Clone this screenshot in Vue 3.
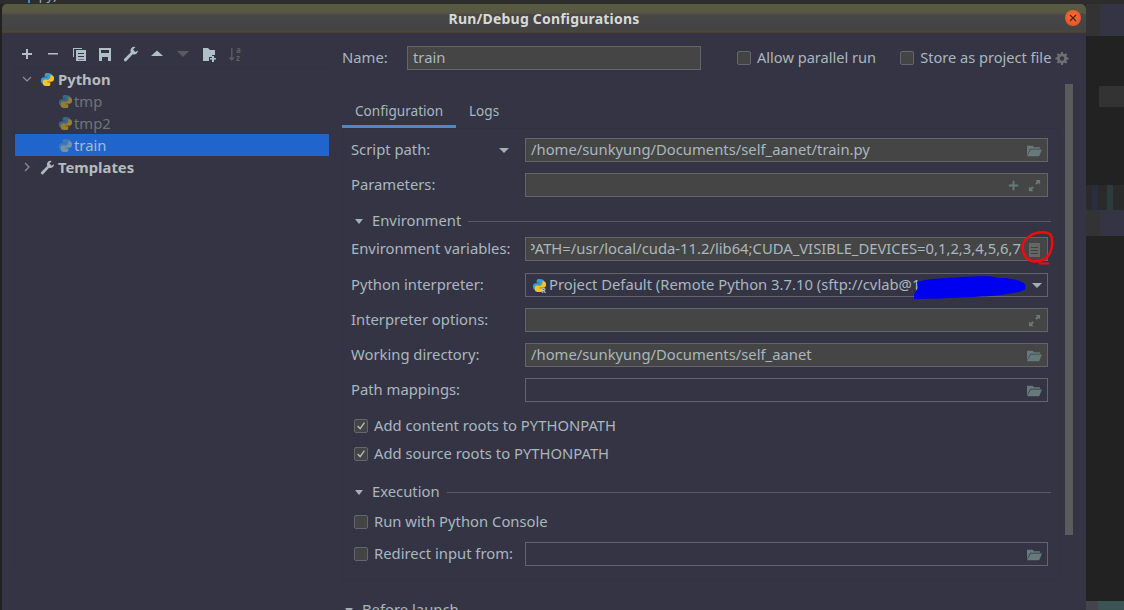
<script setup>
const pyIcon = {
  blue: 'M7.9 1C4.9 1 5 2.3 5 3.6V5h3v.6H3.8C2.3 5.600 1 6.700 1 9c0 2.400 1.100 3.500 2.500 3.500H5v-1.900c0-1.400 1.200-2.600 2.700-2.600h3c1.200 0 2.300-1 2.300-2.300V3.500C13 2 11.500 1 7.900 1Z',
  yellow: 'M8.100 15c3 0 2.900-1.300 2.900-2.600V11H8v-.6h4.200c1.500 0 2.800-1.100 2.800-3.400 0-2.400-1.100-3.500-2.500-3.500H11v1.900c0 1.400-1.200 2.600-2.700 2.600h-3C4.100 8 3 9 3 10.300v2.200C3 14 4.500 15 8.100 15Z'
}
const children = [
  { name: 'tmp', selected: false },
  { name: 'tmp2', selected: false },
  { name: 'train', selected: true }
]
</script>

<template>
  <div class="screen">
    <div class="behind-text"><span>Setup.py)</span></div>
    <div class="desk">
      <div class="dialog">
        <div class="titlebar">
          <span class="title">Run/Debug Configurations</span>
          <span class="close">
            <svg width="10" height="10" viewBox="0 0 10 10"><path d="M2 2l6 6M8 2l-6 6" stroke="#5a1d0a" stroke-width="1.300" fill="none"/></svg>
          </span>
        </div>
        <div class="body">
          <aside class="left">
            <div class="toolbar">
              <svg class="tb" viewBox="0 0 16 16"><path d="M7 3h2v4h4v2H9v4H7V9H3V7h4Z" fill="#afc0c6"/></svg>
              <svg class="tb" viewBox="0 0 16 16"><path d="M3 7h10v1.600H3Z" fill="#afc0c6"/></svg>
              <svg class="tb" viewBox="0 0 16 16"><path d="M2 2h9v1H3v8H2Z M5 4h10v11H5Zm2 3v1h6V7Zm0 3v1h6v-1Zm0 3v.6h6V13Z" fill="#afc0c6" fill-rule="evenodd"/></svg>
              <svg class="tb" viewBox="0 0 16 16"><path d="M2 2h12v13H2Zm2 2v3h8V4ZM5 11v4h6v-4Z" fill="#afc0c6" fill-rule="evenodd"/></svg>
              <svg class="tb" viewBox="0 0 16 16"><path d="M15 4.500a4 4 0 0 1-5.300 3.800L3.600 14.800a1.500 1.500 0 0 1-2.300-2.100l6.400-6.200A4 4 0 0 1 12.500 1L10 3.600 12.400 6Z" fill="#afc0c6"/></svg>
              <svg class="tb" viewBox="0 0 16 16"><path d="M8 4.500 14 10H2Z" fill="#afc0c6"/></svg>
              <svg class="tb" viewBox="0 0 16 16"><path d="M2 5h12L8 11Z" fill="#5a5b5e"/></svg>
              <svg class="tb" viewBox="0 0 16 16"><path d="M2 2h5l2 2h5v5h-3v2H8v4H2Z" fill="#afc0c6"/><path d="M11 10h2v2h2v1.500h-2V16h-2v-2.500H9V12h2Z" fill="#afc0c6"/></svg>
              <svg class="tb" viewBox="0 0 16 16"><path d="M4 2h1.500v9.500H8L4.700 15 1.500 11.500H4Z" fill="#5a5b5e"/><text x="9" y="7" class="az">a</text><text x="9" y="14.500" class="az">z</text></svg>
            </div>
            <div class="tree">
              <div class="node root">
                <svg class="arrow" viewBox="0 0 12 12"><path d="M2 4l4 4 4-4" fill="none" stroke="#8b9093" stroke-width="1.200"/></svg>
                <svg class="py" viewBox="0 0 16 16"><path :d="pyIcon.blue" fill="#3f9bd1"/><path :d="pyIcon.yellow" fill="#f6c51f"/></svg>
                <span>Python</span>
              </div>
              <div v-for="c in children" :key="c.name" class="node child" :class="{ selected: c.selected }">
                <svg class="py" viewBox="0 0 16 16"><path :d="pyIcon.blue" fill="#3f9bd1"/><path :d="pyIcon.yellow" fill="#f6c51f"/></svg>
                <span>{{ c.name }}</span>
              </div>
              <div class="node root">
                <svg class="arrow" viewBox="0 0 12 12"><path d="M4 2l4 4-4 4" fill="none" stroke="#8b9093" stroke-width="1.200"/></svg>
                <svg class="py wrench" viewBox="0 0 16 16"><path d="M15 4.500a4 4 0 0 1-5.300 3.800L3.600 14.800a1.500 1.500 0 0 1-2.300-2.100l6.400-6.200A4 4 0 0 1 12.500 1L10 3.600 12.400 6Z" fill="#afb8bb"/></svg>
                <span>Templates</span>
              </div>
            </div>
          </aside>

          <main class="right">
            <div class="name-row">
              <label class="name-label">Name:</label>
              <div class="field name-field">train</div>
              <div class="check-opt first"><span class="box"></span><span class="opt-text">Allow parallel run</span></div>
              <div class="check-opt second"><span class="box"></span><span class="opt-text">Store as project file</span></div>
              <svg class="gear" viewBox="0 0 16 16"><path d="M7 1h2l.4 2 1.500.6L12.600 2.500 14 4l-1.100 1.700.6 1.500 2 .4v2l-2 .4-.6 1.500L14 13l-1.400 1.400-1.700-1.100-1.500.6-.4 2H7l-.4-2-1.500-.6-1.700 1.100L2 13l1.100-1.700-.6-1.500-2-.4v-2l2-.4.6-1.500L2 4l1.400-1.500 1.700 1.100L6.600 3ZM8 6a2.500 2.500 0 1 0 0 5 2.500 2.500 0 0 0 0-5Z" fill="#6d7073" fill-rule="evenodd"/></svg>
            </div>

            <div class="main-scroll">
              <div class="scroll-content">
                <div class="tabs">
                  <div class="tab active">Configuration</div>
                  <div class="tab">Logs</div>
                </div>
                <div class="panel">
                  <div class="row r-script">
                    <label class="with-caret">Script path:<span class="caret"></span></label>
                    <div class="field">/home/sunkyung/Documents/self_aanet/train.py
                      <svg class="fld-ic" viewBox="0 0 16 16"><path d="M0 3h6l1.500 1.500H14V6H3.500L0 13Z M4 7h12l-3 7H0Z" fill="#66797b"/></svg>
                    </div>
                  </div>
                  <div class="row r-next">
                    <label>Parameters:</label>
                    <div class="field">
                      <svg class="fld-ic plus" viewBox="0 0 16 16"><path d="M7 3h2v4h4v2H9v4H7V9H3V7h4Z" fill="#66797b"/></svg>
                      <svg class="fld-ic" viewBox="0 0 16 16"><path d="M9 2h5v5l-1.700-1.700-2 2-1.600-1.600 2-2ZM7 14H2V9l1.700 1.700 2-2 1.600 1.600-2 2Z" fill="#66797b"/></svg>
                    </div>
                  </div>

                  <div class="section env"><span class="sec-caret"></span><span class="sec-title">Environment</span><span class="sec-line"></span></div>

                  <div class="row r-env">
                    <label>Environment variables:</label>
                    <div class="field env-field">
                      <span class="env-text"><span>PATH=/usr/local/cuda-11.2/lib64;CUDA_VISIBLE_DEVICES=0,1,2,3,4,5,6,7</span></span>
                      <span class="env-btn"><i></i><i></i><i></i></span>
                      <svg class="red" viewBox="0 0 33 34"><path d="M8 6C12 1 24 0 29 3c3 4 3 13 0 19-3 6-10 10-18 8C4 28 1 21 2 14 3 10 5 7 9 5" fill="none" stroke="#f50a0a" stroke-width="2.500"/><path d="M18 32.500h10" stroke="#f50a0a" stroke-width="2"/></svg>
                    </div>
                  </div>
                  <div class="row r-interp">
                    <label>Python interpreter:</label>
                    <div class="field combo">
                      <svg class="py small" viewBox="0 0 16 16"><path :d="pyIcon.blue" fill="#3f9bd1"/><path :d="pyIcon.yellow" fill="#f6c51f"/><text x="10" y="15.500" class="badge">R</text></svg>
                      <span class="combo-text">Project Default (Remote Python 3.7.10 (sftp://cvlab@1</span>
                      <svg class="scribble" viewBox="0 0 112 24"><path d="M3 6C12 3 30 2 48 1c20-1 32-1 36 1 10 0 20 1 26 5 2 2 2 6 0 7-6 3-24 6-50 7-22 1-44 2-60 2v-5l4-6Z" fill="#0000f0"/></svg>
                      <span class="caret combo-caret"></span>
                    </div>
                  </div>
                  <div class="row r-next">
                    <label>Interpreter options:</label>
                    <div class="field">
                      <svg class="fld-ic" viewBox="0 0 16 16"><path d="M9 2h5v5l-1.700-1.700-2 2-1.600-1.600 2-2ZM7 14H2V9l1.700 1.700 2-2 1.600 1.600-2 2Z" fill="#66797b"/></svg>
                    </div>
                  </div>
                  <div class="row r-next">
                    <label>Working directory:</label>
                    <div class="field">/home/sunkyung/Documents/self_aanet
                      <svg class="fld-ic" viewBox="0 0 16 16"><path d="M0 3h6l1.500 1.500H14V6H3.500L0 13Z M4 7h12l-3 7H0Z" fill="#66797b"/></svg>
                    </div>
                  </div>
                  <div class="row r-next">
                    <label>Path mappings:</label>
                    <div class="field empty">
                      <svg class="fld-ic" viewBox="0 0 16 16"><path d="M0 3h6l1.500 1.500H14V6H3.500L0 13Z M4 7h12l-3 7H0Z" fill="#66797b"/></svg>
                    </div>
                  </div>

                  <div class="check c1"><span class="box on"><svg viewBox="0 0 14 14"><path d="M3 7l3 3 5-7" fill="none" stroke="#b4b9bb" stroke-width="1.600"/></svg></span>Add content roots to PYTHONPATH</div>
                  <div class="check c2"><span class="box on"><svg viewBox="0 0 14 14"><path d="M3 7l3 3 5-7" fill="none" stroke="#b4b9bb" stroke-width="1.600"/></svg></span>Add source roots to PYTHONPATH</div>

                  <div class="section exec"><span class="sec-caret"></span><span class="sec-title">Execution</span><span class="sec-line"></span></div>

                  <div class="check c3"><span class="box"></span>Run with Python Console</div>
                  <div class="row r-redirect">
                    <label class="check-label"><span class="box"></span>Redirect input from:</label>
                    <div class="field empty">
                      <svg class="fld-ic" viewBox="0 0 16 16"><path d="M0 3h6l1.500 1.500H14V6H3.500L0 13Z M4 7h12l-3 7H0Z" fill="#66797b"/></svg>
                    </div>
                  </div>
                </div>
                <div class="section before"><span class="sec-caret"></span><span class="sec-title">Before launch</span></div>
              </div>
              <div class="scrollbar"><div class="thumb"></div></div>
            </div>
          </main>
        </div>
      </div>
      <div class="side">
        <div class="side-band"><i></i><b></b></div>
        <div class="side-gap g1"></div>
        <div class="side-block"></div>
        <div class="side-gap g2"></div>
        <div class="side-noise"></div>
        <div class="side-band b2"><i></i><b></b></div>
        <div class="side-gap g3"></div>
        <div class="side-foot"></div>
      </div>
    </div>
  </div>
</template>

<style>
html, body { margin: 0; background: #222; overflow: hidden; }
</style>

<style scoped>
.screen {
  width: 1124px; height: 610px; overflow: hidden; background: #222;
  font-family: "Noto Sans", "Open Sans", sans-serif; font-size: 14.8px; color: #a9b7bf;
  display: flex; flex-direction: column;
}
.behind-text {
  height: 4px; background: #2d2d2d; overflow: hidden; flex: none;
  display: flex; align-items: flex-end; color: #9db0bd; font-size: 13px; line-height: 13px;
}
.behind-text span { transform: translateY(-2px); }
.desk { display: flex; flex: 1; min-height: 0; }
.dialog {
  width: 1084px; margin-left: 2px; background: #353444; border-radius: 5px 5px 0 0;
  display: flex; flex-direction: column; flex: none; overflow: hidden;
}
.side { flex: 1; display: flex; flex-direction: column; }
.side-band { height: 32px; display: flex; flex: none; }
.side-band i { width: 14px; background: #333; }
.side-band b { flex: 1; background: #353444; }
.side-band.b2 { height: 26px; }
.side-gap { background: #222; flex: none; }
.g1 { height: 50px; }
.g2 { height: 78px; }
.g3 { height: 365px; }
.side-block { height: 21px; width: 25px; margin-left: 13px; background: #333; flex: none; }
.side-noise { height: 25px; flex: none; background: linear-gradient(90deg, #2a2a2a 0 6px, #2c2c40 6px 12px, #2a2a2a 12px 21px, #2c3c3c 21px 27px, #2a2a2a 27px); }
.side-foot { flex: 1; background: linear-gradient(90deg, #44444c 0 12px, #3b5353 12px); }

.titlebar {
  height: 29px; flex: none; display: flex; align-items: center; justify-content: center;
  position: relative;
  background: linear-gradient(#585a42 0, #565841 9px, #56464a 10px, #474747 11px, #434343 26px, #4a4a36 27px, #4a3f30 29px);
}
.title { font-weight: 700; font-size: 14px; color: #d9d9d5; letter-spacing: 0.2px; }
.close {
  position: absolute; right: 5px; top: 6px; width: 16px; height: 16px; border-radius: 50%;
  background: radial-gradient(circle at 50% 40%, #f4743c, #e0481c);
  display: flex; align-items: center; justify-content: center;
}

.body { flex: 1; display: flex; min-height: 0; }
.left { width: 340px; flex: none; box-sizing: border-box; padding: 0 13px 0 12px; }
.toolbar { display: flex; height: 34px; align-items: center; gap: 10px; padding: 8px 0 0 5px; box-sizing: border-box; }
.tb { width: 16px; height: 16px; flex: none; }
.az { font: 700 8px "Noto Sans", sans-serif; fill: #5f6063; }
.tree { border-top: 1px solid #32313f; border-left: 1px solid #32313f; height: 500px; }
.node { height: 22px; display: flex; align-items: center; white-space: nowrap; }
.root { font-weight: 700; color: #b6bcbe; padding-left: 6px; }
.arrow { width: 12px; height: 12px; margin-right: 7px; flex: none; }
.py { width: 15px; height: 15px; margin-right: 3px; flex: none; }
.wrench { width: 15px; }
.child { padding-left: 43px; color: #6c7478; }
.child .py { opacity: .5; margin-right: 1px; }
.selected { background: #2065cc; color: #a7b8de; }
.selected .py { opacity: .45; filter: grayscale(.5); }

.right { flex: 1; display: flex; flex-direction: column; min-width: 0; }
.name-row { height: 47px; display: flex; align-items: flex-start; padding-top: 13px; box-sizing: border-box; flex: none; }
.name-label { width: 65px; box-sizing: border-box; line-height: 22px; }
.field {
  height: 24px; box-sizing: border-box; border: 1px solid #646568; background: #454545;
  display: flex; align-items: center; padding: 0 5px 2px; line-height: 20px; flex: 1; min-width: 0;
  position: relative; white-space: nowrap; overflow: hidden; color: #a9b7bf;
}
.field.empty { background: transparent; }
.name-field { width: 294px; flex: none; }
.check-opt { display: flex; align-items: center; height: 24px; white-space: nowrap; }
.opt-text { padding-bottom: 2px; font-size: 14.6px; }
.check-opt.first { margin-left: 36px; }
.check-opt.second { margin-left: 24px; }
.box {
  width: 14px; height: 14px; box-sizing: border-box; border: 1px solid #656669; border-radius: 2px;
  background: #444; flex: none; margin-right: 6px; display: inline-flex;
}
.box svg { width: 12px; height: 12px; }
.gear { width: 14px; height: 14px; margin: 5px 0 0 4px; flex: none; }

.main-scroll { flex: 1; display: flex; min-height: 0; }
.scroll-content { width: 718px; flex: none; }
.tabs { display: flex; height: 46px; margin-top: 3px; border-bottom: 1px solid #32313f; box-sizing: border-box; align-items: stretch; }
.tab { padding: 18px 13px 0; line-height: 20px; box-sizing: border-box; color: #a9b7bf; font-size: 13.6px; }
.tab.active { width: 114px; border-bottom: 3px solid #4a88c7; }
.panel {
  border: 1px solid #32313f; border-top: 0; height: 451px; box-sizing: border-box;
  padding: 9px 11px 0 8px;
}
.row { display: flex; align-items: center; height: 24px; }
.row > label { width: 174px; height: 24px; padding-bottom: 2px; box-sizing: border-box; flex: none; white-space: nowrap; display: flex; align-items: center; }
.caret { width: 0; height: 0; border: 5px solid transparent; border-top: 5px solid #a3b0b6; border-bottom: 0; }
.with-caret .caret { margin-left: auto; margin-right: 16px; margin-top: 2px; }
.r-next { margin-top: 11px; }
.fld-ic { width: 15px; height: 15px; margin-left: auto; margin-top: 2px; flex: none; }
.fld-ic.plus + .fld-ic { margin-left: 6px; }
.section { display: flex; align-items: center; height: 20px; margin-left: 4px; }
.sec-caret { width: 0; height: 0; border: 4.500px solid transparent; border-top: 5px solid #a3b0b6; border-bottom: 0; margin-right: 9px; }
.sec-title { white-space: nowrap; padding-bottom: 2px; }
.sec-line { flex: 1; height: 1px; background: #5a5b60; margin-left: 7px; margin-right: -3px; }
.env { margin-top: 14px; }
.r-env { margin-top: 6px; }
.env-field { overflow: visible; padding-right: 26px; }
.env-text { display: flex; width: 100%; overflow: hidden; justify-content: flex-end; }
.env-text span { flex: none; }
.env-btn {
  position: absolute; right: 7px; top: 5px; width: 11px; height: 14px; background: #666;
  display: flex; flex-direction: column; align-items: center; justify-content: center; gap: 2px;
}
.env-btn i { width: 7px; height: 1px; background: #3f3f3f; }
.red { position: absolute; right: -7px; top: -7px; width: 33px; height: 34px; z-index: 2; }
.r-interp { margin-top: 12px; }
.combo { background: transparent; padding-left: 6px; overflow: visible; }
.combo-text { overflow: hidden; }
.small { margin-right: 2px; margin-top: 2px; }
.badge { font: 700 7px "Noto Sans", sans-serif; fill: #c4c8ca; }
.scribble { position: absolute; left: 388px; top: 2px; width: 112px; height: 24px; }
.combo-caret { position: absolute; right: 5px; top: 9px; }
.check { display: flex; align-items: center; height: 24px; padding-bottom: 2px; box-sizing: border-box; white-space: nowrap; margin-left: 3px; }
.check .box, .check-label .box { margin-top: 2px; }
.c1 { margin-top: 12px; }
.c2 { margin-top: 4px; }
.exec { margin-top: 16px; }
.c3 { margin-top: 8px; }
.r-redirect { margin-top: 8px; }
.row > .check-label { padding-left: 3px; }
.before { margin: 20px 0 0 3px; }
.scrollbar { width: 8px; margin-left: 5px; flex: none; }
.thumb { width: 8px; height: 451px; margin-top: 4px; background: #5b5b5b; }
</style>
